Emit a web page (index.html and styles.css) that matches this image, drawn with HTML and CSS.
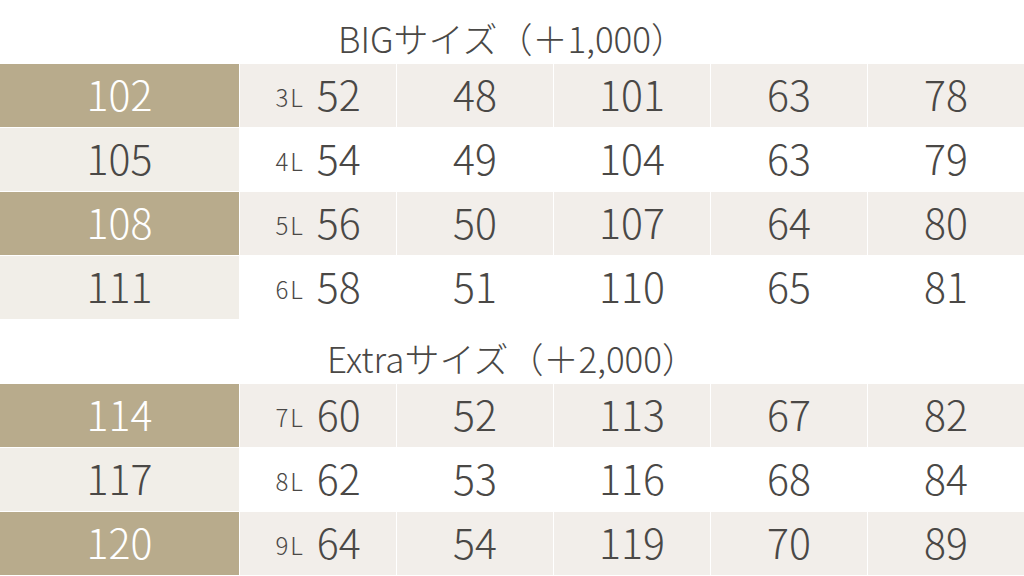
FILE: index.html
```html
<!DOCTYPE html>
<html lang="ja">
<head>
<meta charset="utf-8">
<title>サイズ表</title>
<link rel="stylesheet" href="styles.css">
</head>
<body>
<main class="page">
  <h2 class="title title-big">BIGサイズ（＋1,000）</h2>
  <div class="table table-big">
    <div class="cell head odd">102</div><div class="cell odd"><span class="size">3L</span>52</div><div class="cell odd">48</div><div class="cell odd">101</div><div class="cell odd">63</div><div class="cell odd">78</div>
    <div class="cell head even">105</div><div class="cell even"><span class="size">4L</span>54</div><div class="cell even">49</div><div class="cell even">104</div><div class="cell even">63</div><div class="cell even">79</div>
    <div class="cell head odd">108</div><div class="cell odd"><span class="size">5L</span>56</div><div class="cell odd">50</div><div class="cell odd">107</div><div class="cell odd">64</div><div class="cell odd">80</div>
    <div class="cell head even">111</div><div class="cell even"><span class="size">6L</span>58</div><div class="cell even">51</div><div class="cell even">110</div><div class="cell even">65</div><div class="cell even">81</div>
  </div>
  <h2 class="title title-extra">Extraサイズ（＋2,000）</h2>
  <div class="table table-extra">
    <div class="cell head odd">114</div><div class="cell odd"><span class="size">7L</span>60</div><div class="cell odd">52</div><div class="cell odd">113</div><div class="cell odd">67</div><div class="cell odd">82</div>
    <div class="cell head even">117</div><div class="cell even"><span class="size">8L</span>62</div><div class="cell even">53</div><div class="cell even">116</div><div class="cell even">68</div><div class="cell even">84</div>
    <div class="cell head odd">120</div><div class="cell odd"><span class="size">9L</span>64</div><div class="cell odd">54</div><div class="cell odd">119</div><div class="cell odd">70</div><div class="cell odd">89</div>
  </div>
</main>
</body>
</html>
```

FILE: styles.css
```css
html, body {
  margin: 0;
  padding: 0;
  background: #ffffff;
}

body {
  font-family: "Noto Sans CJK JP", "Noto Sans", sans-serif;
  font-weight: 300;
  color: #4a4846;
  width: 1024px;
  height: 576px;
  overflow: hidden;
}

.page {
  display: flex;
  flex-direction: column;
}

.title {
  margin: 0;
  font-weight: 300;
  font-size: 35px;
  display: flex;
  align-items: center;
  justify-content: center;
  line-height: 1;
  box-sizing: border-box;
  padding-top: 10px;
}

.title-big {
  height: 64px;
}

.title-extra {
  height: 65px;
  padding-top: 12px;
}

.table {
  display: grid;
  grid-template-columns: 239px repeat(5, 1fr);
  grid-auto-rows: 63px;
  column-gap: 1px;
  row-gap: 1px;
  background: #ffffff;
}

.cell {
  display: flex;
  align-items: center;
  justify-content: center;
  font-size: 41px;
  line-height: 1;
  padding-bottom: 4px;
  box-sizing: border-box;
}

.cell.odd {
  background: #f2eeea;
}

.cell.even {
  background: #ffffff;
}

.cell.head.odd {
  background: #b8ab8c;
  color: #ffffff;
}

.cell.head.even {
  background: #f1eee8;
}

.size {
  font-size: 24px;
  letter-spacing: 2px;
  margin-right: 12px;
  padding-top: 6px;
}
```
